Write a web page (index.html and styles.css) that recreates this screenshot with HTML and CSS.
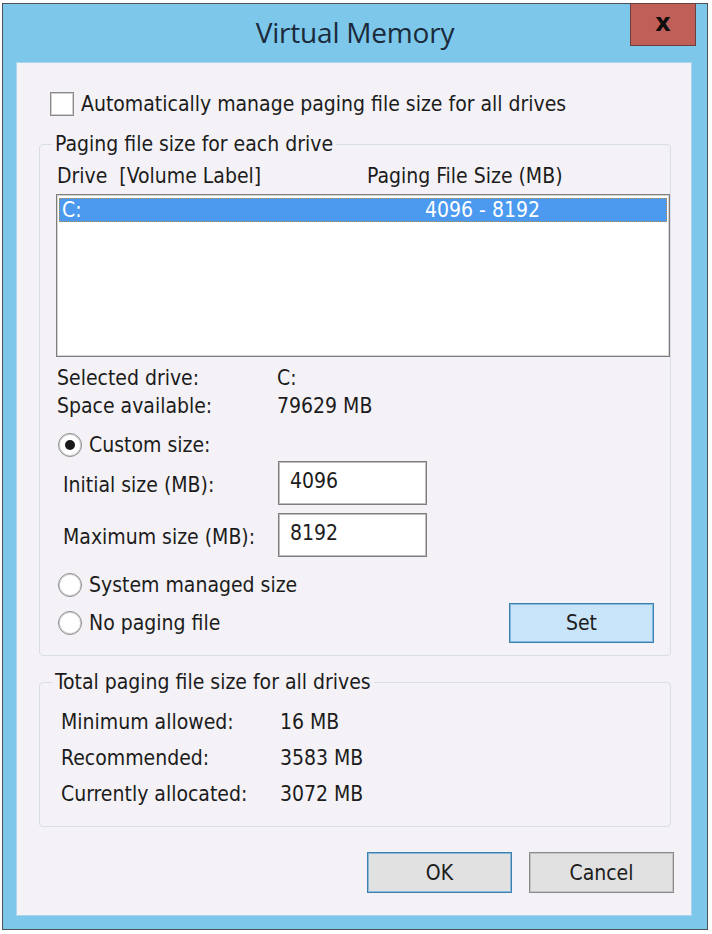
FILE: index.html
```html
<!DOCTYPE html>
<html>
<head>
<meta charset="utf-8">
<title>Virtual Memory</title>
<link rel="stylesheet" href="styles.css">
</head>
<body>
<div class="window">
  <div class="titlebar">
    <div class="title">Virtual Memory</div>
    <div class="close">x</div>
  </div>
  <div class="client">
    <div class="auto-row"><span class="checkbox"></span><span>Automatically manage paging file size for all drives</span></div>

    <fieldset class="group group1">
      <legend>Paging file size for each drive</legend>
      <div class="list-head"><span class="col-drive">Drive&nbsp;&nbsp;[Volume Label]</span><span>Paging File Size (MB)</span></div>
      <div class="listbox">
        <div class="list-row selected"><span class="row-drive">C:</span><span>4096 - 8192</span></div>
      </div>
      <div class="info-grid">
        <span>Selected drive:</span><span>C:</span>
        <span>Space available:</span><span>79629 MB</span>
      </div>
      <div class="radio-row custom"><span class="radio checked"></span><span>Custom size:</span></div>
      <div class="field-row first"><span class="field-label">Initial size (MB):</span><div class="input">4096</div></div>
      <div class="field-row"><span class="field-label">Maximum size (MB):</span><div class="input">8192</div></div>
      <div class="radio-row system"><span class="radio"></span><span>System managed size</span></div>
      <div class="last-row">
        <div class="radio-row"><span class="radio"></span><span>No paging file</span></div>
        <div class="btn btn-set">Set</div>
      </div>
    </fieldset>

    <fieldset class="group group2">
      <legend>Total paging file size for all drives</legend>
      <div class="totals">
        <span>Minimum allowed:</span><span>16 MB</span>
        <span>Recommended:</span><span>3583 MB</span>
        <span>Currently allocated:</span><span>3072 MB</span>
      </div>
    </fieldset>

    <div class="buttons">
      <div class="btn btn-default">OK</div>
      <div class="btn btn-cancel">Cancel</div>
    </div>
  </div>
</div>
</body>
</html>
```

FILE: styles.css
```css
* { box-sizing: border-box; }
html, body { margin: 0; padding: 0; }
body {
  background: #ffffff;
  width: 712px;
  height: 934px;
  overflow: hidden;
  font-family: "DejaVu Sans Condensed", "DejaVu Sans", sans-serif;
  font-size: 21px;
  color: #1c1c1c;
}
.window {
  margin: 3px 0 0 2px;
  width: 706px;
  height: 927px;
  background: #7cc7ea;
  border: 1px solid #4d5257;
  display: flex;
  flex-direction: column;
  position: relative;
}
.titlebar {
  height: 58px;
  display: flex;
  align-items: center;
  justify-content: center;
  padding-bottom: 2px;
}
.title {
  font-family: "Open Sans", sans-serif;
  font-size: 28px;
  color: #1b2a3a;
  letter-spacing: -0.2px;
}
.close {
  position: absolute;
  left: 627px;
  top: -1px;
  width: 66px;
  height: 43px;
  background: #bf5f58;
  border: 1px solid #6b3f3b;
  color: #0d0d0d;
  font-family: "DejaVu Sans", sans-serif;
  font-weight: bold;
  font-size: 24px;
  display: flex;
  align-items: center;
  justify-content: center;
  padding-bottom: 4px;
}
.client {
  margin-left: 13px;
  width: 676px;
  height: 854px;
  background: #f4f2f6;
  border: 1px solid #a9d5ef;
  display: flex;
  flex-direction: column;
}
.auto-row {
  margin: 29px 0 0 33px;
  height: 24px;
  display: flex;
  align-items: center;
  gap: 7px;
}
.checkbox {
  width: 24px;
  height: 24px;
  background: #fff;
  border: 1px solid #8a8a8a;
  box-shadow: inset 0 0 0 1px #cfcfcf;
}
.group {
  margin: 16px 0 0 22px;
  width: 632px;
  padding: 0;
  border: 1px solid #d9dde5;
  border-radius: 4px;
  min-width: 0;
}
.group legend {
  margin-left: 12px;
  padding: 0 3px;
  line-height: 24px;
  height: 24px;
}
.group1 { padding-bottom: 12px; }
.list-head {
  margin-top: 8px;
  padding-left: 17px;
  line-height: 24px;
  display: flex;
}
.col-drive { width: 310px; }
.listbox {
  margin: 6px 0 0 16px;
  width: 614px;
  height: 163px;
  background: #fff;
  border: 1px solid #7e7e7e;
  box-shadow: inset 0 0 0 1px #d4d4d4;
  padding: 3px 2px;
}
.list-row {
  height: 24px;
  line-height: 22px;
  display: flex;
  padding-left: 2px;
}
.list-row.selected {
  background: #4b9af0;
  color: #fff;
  border: 1px dotted #b9894a;
}
.row-drive { width: 363px; }
.info-grid {
  margin: 7px 0 0 17px;
  display: grid;
  grid-template-columns: 220px 1fr;
  line-height: 28px;
}
.radio-row {
  height: 24px;
  display: flex;
  align-items: center;
  gap: 7px;
  margin-left: 18px;
}
.radio-row.custom { margin-top: 13px; }
.radio-row.system { margin-top: 16px; }
.radio {
  width: 24px;
  height: 24px;
  border-radius: 50%;
  background: #fff;
  border: 1px solid #8a8a8a;
  box-shadow: inset 0 0 0 1px #d6d6d6;
  display: flex;
  align-items: center;
  justify-content: center;
}
.radio.checked::after {
  content: "";
  width: 10px;
  height: 10px;
  border-radius: 50%;
  background: #1a1a1a;
}
.field-row {
  margin: 8px 0 0 23px;
  display: flex;
  align-items: center;
}
.field-row.first { margin-top: 4px; }
.field-label { width: 215px; padding-top: 4px; }
.input {
  width: 149px;
  height: 44px;
  background: #fff;
  border: 1px solid #7e7e7e;
  box-shadow: inset 0 0 0 1px #bdbdbd;
  padding: 0 0 4px 11px;
  display: flex;
  align-items: center;
}
.last-row {
  margin-top: 6px;
  display: flex;
  align-items: center;
  justify-content: space-between;
  padding-right: 16px;
}
.btn {
  width: 145px;
  height: 41px;
  display: flex;
  align-items: center;
  justify-content: center;
  background: #e1e1e1;
  border: 1px solid #8a8a8a;
  box-shadow: inset 0 0 0 1px #c4c4c4;
}
.btn-set {
  background: #c7e4f9;
  border-color: #3c7fb1;
  box-shadow: inset 0 0 0 1px #86b7dd;
  height: 40px;
}
.group2 {
  margin-top: 14px;
  padding-bottom: 14px;
}
.totals {
  margin: 10px 0 0 21px;
  display: grid;
  grid-template-columns: 219px 1fr;
  line-height: 36px;
}
.buttons {
  margin: 25px 17px 0 0;
  display: flex;
  justify-content: flex-end;
  gap: 17px;
}
.btn-default {
  border-color: #3c7fb1;
  box-shadow: inset 0 0 0 1px #8cb8da;
}
```
